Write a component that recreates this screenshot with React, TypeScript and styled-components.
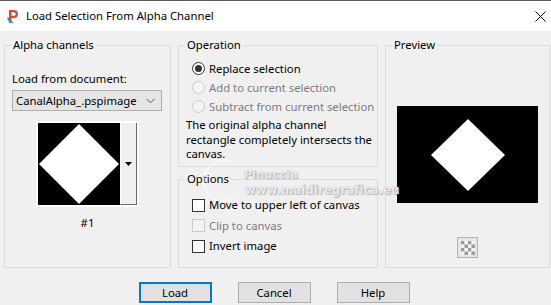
import React from "react";
import styled, { createGlobalStyle, css } from "styled-components";

const GlobalStyle = createGlobalStyle`
  html, body { margin: 0; padding: 0; background: #f0f0f0; }
  body { font-family: "Segoe UI", "Noto Sans", "Liberation Sans", sans-serif; font-size: 11.3px; color: #000; }
`;

const Window = styled.div`
  width: 551px;
  height: 305px;
  box-sizing: border-box;
  border-top: 1px solid #5b5b5b;
  background: #f0f0f0;
  display: flex;
  flex-direction: column;
  position: relative;
  overflow: hidden;
`;

const TitleBar = styled.div`
  height: 30px;
  background: #fff;
  display: flex;
  align-items: center;
  padding: 0 4px 0 7px;
  gap: 7px;
`;

const TitleText = styled.div`
  flex: 1;
  font-size: 11.3px;
  line-height: 16px;
`;

const CloseBox = styled.div`
  width: 14px;
  height: 14px;
  display: flex;
  align-items: center;
  justify-content: center;
`;

const Body = styled.div`
  padding: 6px 4px 0;
  display: flex;
  flex-direction: column;
`;

const Columns = styled.div`
  display: grid;
  grid-template-columns: 167px 200px 165px;
  column-gap: 7px;
  height: 231px;
`;

const Stack = styled.div`
  display: flex;
  flex-direction: column;
  gap: 4px;
`;

const Group = styled.fieldset<{ $h?: number }>`
  margin: 0;
  padding: 0;
  border: 1px solid #dcdcdc;
  min-width: 0;
  box-sizing: border-box;
  ${(p) => (p.$h ? css`height: ${p.$h}px;` : css`flex: 1;`)}
  display: flex;
  flex-direction: column;
`;

const Legend = styled.legend`
  margin-left: 6px;
  padding: 0 2px;
  line-height: 16px;
  font-size: 11.3px;
`;

const Label = styled.div<{ $mt?: number }>`
  line-height: 16px;
  margin: ${(p) => p.$mt ?? 0}px 0 0 7px;
`;

const Select = styled.div`
  margin: 3px 8px 0 7px;
  height: 21px;
  box-sizing: border-box;
  border: 1px solid #adadad;
  background: #e5e5e5;
  display: flex;
  align-items: center;
  padding: 0 6px 0 3px;
  justify-content: space-between;
  white-space: nowrap;
`;

const ThumbFrame = styled.div`
  margin: 10px auto 0;
  display: flex;
  border: 2px solid #fff;
  width: fit-content;
`;

const ThumbImage = styled.div`
  width: 82px;
  height: 82px;
  background: #000;
  display: flex;
`;

const ThumbDrop = styled.div`
  width: 17px;
  box-sizing: border-box;
  background: #f0f0f0;
  border-right: 1px solid #696969;
  border-bottom: 1px solid #696969;
  border-left: 1px solid #fff;
  display: flex;
  align-items: center;
  justify-content: center;
`;

const Caption = styled.div`
  text-align: center;
  line-height: 16px;
  margin-top: 8px;
`;

const OptionList = styled.div<{ $pt: number; $row: number }>`
  padding: ${(p) => p.$pt}px 0 0 13px;
  display: flex;
  flex-direction: column;
  > * { height: ${(p) => p.$row}px; }
`;

const OptionRow = styled.div<{ $disabled?: boolean }>`
  display: flex;
  align-items: center;
  gap: 4px;
  white-space: nowrap;
  color: ${(p) => (p.$disabled ? "#7c7c7c" : "#000")};
  line-height: 16px;
`;

const Radio = styled.span<{ $checked?: boolean; $disabled?: boolean }>`
  width: 13px;
  height: 13px;
  flex: none;
  box-sizing: border-box;
  border-radius: 50%;
  border: 1px solid ${(p) => (p.$disabled ? "#cccccc" : "#333")};
  background: ${(p) => (p.$disabled ? "#f4f4f4" : "#fff")};
  display: flex;
  align-items: center;
  justify-content: center;
  &::after {
    content: "";
    width: 7px;
    height: 7px;
    border-radius: 50%;
    background: ${(p) => (p.$checked ? "#333" : "transparent")};
  }
`;

const Check = styled.span<{ $disabled?: boolean }>`
  width: 13px;
  height: 13px;
  flex: none;
  box-sizing: border-box;
  border: 1px solid ${(p) => (p.$disabled ? "#cccccc" : "#333")};
  background: ${(p) => (p.$disabled ? "#f4f4f4" : "#fff")};
`;

const Description = styled.div`
  margin: 2px 0 0 7px;
  line-height: 14.5px;
  white-space: nowrap;
`;

const PreviewBox = styled.div`
  margin: 53px auto 0;
  width: 141px;
  height: 97px;
  background: #000;
  display: flex;
`;

const CheckerButton = styled.div`
  margin: 34px auto 0;
  width: 21px;
  height: 21px;
  box-sizing: border-box;
  border: 1px solid #b4b4b4;
  background: #e6e6e6;
  display: flex;
  align-items: center;
  justify-content: center;
`;

const ButtonRow = styled.div`
  display: flex;
  justify-content: center;
  gap: 26px;
  margin-top: 14px;
  padding-right: 3px;
`;

const Button = styled.button<{ $default?: boolean }>`
  width: 73px;
  height: 21px;
  box-sizing: border-box;
  margin: 0;
  padding: 0;
  font: inherit;
  color: #000;
  background: #e1e1e1;
  border: ${(p) => (p.$default ? "2px solid #0078d7" : "1px solid #adadad")};
  display: flex;
  align-items: center;
  justify-content: center;
`;

const Watermark = styled.div`
  position: absolute;
  left: 236px;
  top: 167px;
  pointer-events: none;
  font-family: "DejaVu Sans", "Liberation Sans", sans-serif;
  font-weight: bold;
  color: rgba(255, 255, 255, 0.85);
  text-shadow: 0 0 1px rgba(90, 90, 90, 0.6), 1px 1px 1px rgba(120, 120, 120, 0.45);
`;

const WmName = styled.div`
  font-size: 11px;
  line-height: 14px;
  margin-left: 8px;
  letter-spacing: 0.3px;
`;

const WmSite = styled.div`
  font-size: 11.5px;
  line-height: 16px;
  margin-left: 9px;
  letter-spacing: 0.2px;
`;

const WmArc = styled.svg`
  position: absolute;
  left: -36px;
  top: -10px;
`;

const AppIcon = () => (
  <svg width="12" height="15" viewBox="0 0 12 15">
    <path d="M2 1 H7 A4 4 0 0 1 7 9 H4.5 V14 H2 Z M4.5 3.3 V6.7 H7 A1.7 1.7 0 0 0 7 3.3 Z" fill="#e2452d" fillRule="evenodd" />
    <path d="M1 8.5 A5 5 0 0 0 6 13.5" stroke="#2b8fd6" strokeWidth="1.6" fill="none" />
    <circle cx="8.6" cy="3" r="1.2" fill="#2b8fd6" />
  </svg>
);

const CloseIcon = () => (
  <svg width="11" height="11" viewBox="0 0 11 11">
    <path d="M0.5 0.5 L10.5 10.5 M10.5 0.5 L0.5 10.5" stroke="#000" strokeWidth="1" />
  </svg>
);

const Chevron = () => (
  <svg width="9" height="6" viewBox="0 0 9 6">
    <path d="M0.5 0.8 L4.5 4.8 L8.5 0.8" stroke="#555" strokeWidth="1" fill="none" />
  </svg>
);

const DownTriangle = () => (
  <svg width="7" height="4" viewBox="0 0 7 4">
    <path d="M0 0 H7 L3.5 4 Z" fill="#000" />
  </svg>
);

const Checker = () => {
  const cells: React.ReactElement[] = [];
  for (let r = 0; r < 4; r++)
    for (let c = 0; c < 4; c++)
      cells.push(
        <rect key={`${r}-${c}`} x={c * 3.5} y={r * 3.5} width={3.5} height={3.5} fill={(r + c) % 2 === 0 ? "#9b9b9b" : "#f2f2f2"} />
      );
  return (
    <svg width="14" height="14" viewBox="0 0 14 14">
      {cells}
    </svg>
  );
};

export default function App() {
  return (
    <>
      <GlobalStyle />
      <Window>
        <TitleBar>
          <AppIcon />
          <TitleText>Load Selection From Alpha Channel</TitleText>
          <CloseBox>
            <CloseIcon />
          </CloseBox>
        </TitleBar>
        <Body>
          <Columns>
            <Group>
              <Legend>Alpha channels</Legend>
              <Label $mt={18}>Load from document:</Label>
              <Select>
                <span>CanalAlpha_.pspimage</span>
                <Chevron />
              </Select>
              <ThumbFrame>
                <ThumbImage>
                  <svg width="82" height="82" viewBox="0 0 82 82">
                    <polygon points="41,1 81,41 41,81 1,41" fill="#fff" />
                  </svg>
                </ThumbImage>
                <ThumbDrop>
                  <DownTriangle />
                </ThumbDrop>
              </ThumbFrame>
              <Caption>#1</Caption>
            </Group>
            <Stack>
              <Group $h={130}>
                <Legend>Operation</Legend>
                <OptionList $pt={6} $row={19}>
                  <OptionRow>
                    <Radio $checked />
                    Replace selection
                  </OptionRow>
                  <OptionRow $disabled>
                    <Radio $disabled />
                    Add to current selection
                  </OptionRow>
                  <OptionRow $disabled>
                    <Radio $disabled />
                    Subtract from current selection
                  </OptionRow>
                </OptionList>
                <Description>
                  The original alpha channel
                  <br />
                  rectangle completely intersects the
                  <br />
                  canvas.
                </Description>
              </Group>
              <Group>
                <Legend>Options</Legend>
                <OptionList $pt={8} $row={20.5}>
                  <OptionRow>
                    <Check />
                    Move to upper left of canvas
                  </OptionRow>
                  <OptionRow $disabled>
                    <Check $disabled />
                    Clip to canvas
                  </OptionRow>
                  <OptionRow>
                    <Check />
                    Invert image
                  </OptionRow>
                </OptionList>
              </Group>
            </Stack>
            <Group>
              <Legend>Preview</Legend>
              <PreviewBox>
                <svg width="141" height="97" viewBox="0 0 141 97">
                  <polygon points="71,13 108,49 71,85 34,49" fill="#fff" />
                </svg>
              </PreviewBox>
              <CheckerButton>
                <Checker />
              </CheckerButton>
            </Group>
          </Columns>
          <ButtonRow>
            <Button $default>Load</Button>
            <Button>Cancel</Button>
            <Button>Help</Button>
          </ButtonRow>
        </Body>
        <Watermark>
          <WmArc width="40" height="50" viewBox="0 0 40 50">
            <path d="M30 4 A20 20 0 1 0 34 40" stroke="rgba(255,255,255,0.55)" strokeWidth="2" fill="none" />
          </WmArc>
          <WmName>Pinuccia</WmName>
          <WmSite>www.maidiregrafica.eu</WmSite>
        </Watermark>
      </Window>
    </>
  );
}
